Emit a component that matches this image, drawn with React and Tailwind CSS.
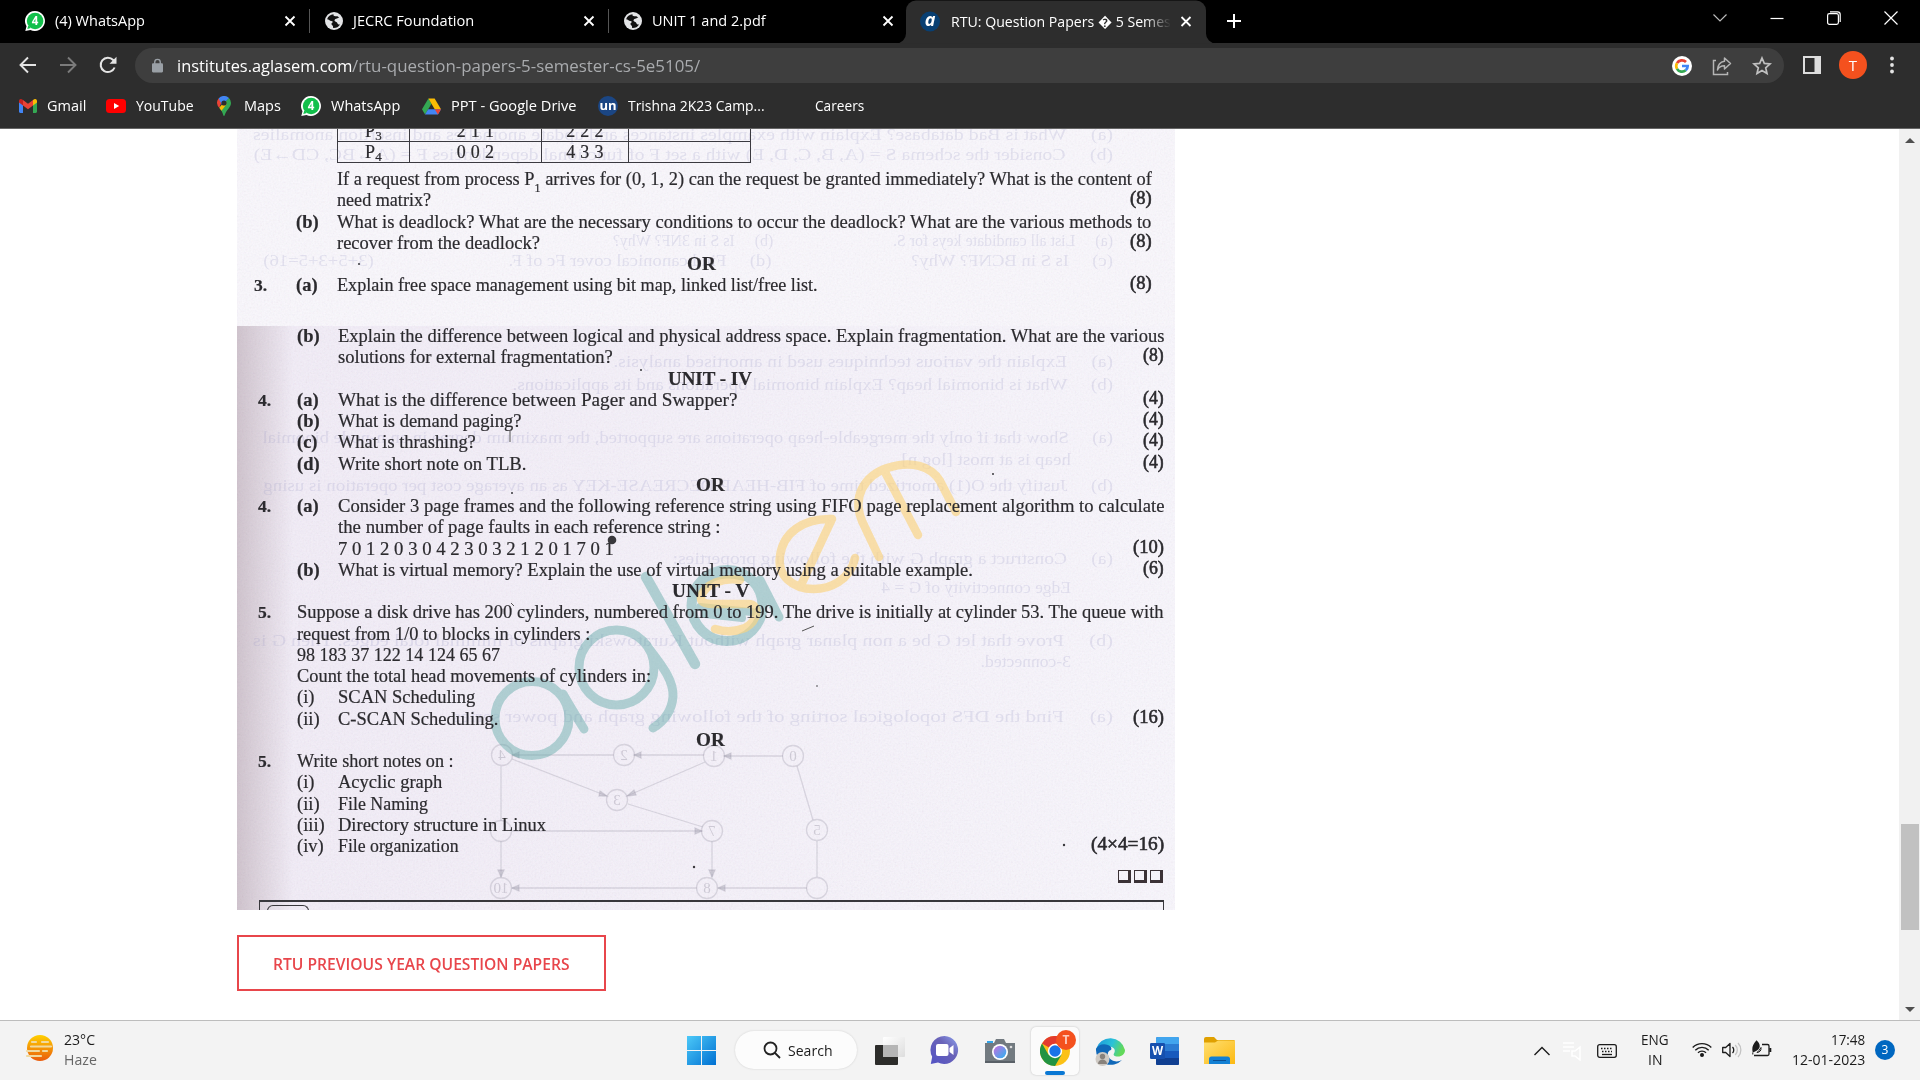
import React, { useLayoutEffect, useRef } from "react";

/* Text stretched horizontally so that it fills exactly `w` pixels. */
function Fit({ w, className = "", children }) {
  const ref = useRef(null);
  useLayoutEffect(() => {
    const el = ref.current;
    el.style.transform = "none";
    el.style.transform = `scaleX(${w / el.offsetWidth})`;
  }, [w]);
  return (
    <span className={"inline-block shrink-0 whitespace-nowrap " + className} style={{ width: w }}>
      <span ref={ref} className="inline-block origin-left">{children}</span>
    </span>
  );
}

/* ---------- icons ---------- */
const WhatsApp = ({ className = "" }) => (
  <svg viewBox="0 0 20 20" className={"h-5 w-5 shrink-0 " + className}>
    <path d="M10 0a10 10 0 1 1-4.6 18.9L0.3 20l1.2-4.8A10 10 0 0 1 10 0z" fill="#fff" />
    <circle cx="10.1" cy="10" r="8.3" fill="#12c04b" />
    <path d="M2.3 17.9l1-3.4 2.6 2.5z" fill="#12c04b" />
    <text x="10" y="14.2" fontSize="11.5" fontWeight="700" fill="#fff" textAnchor="middle" fontFamily="Open Sans, sans-serif">4</text>
  </svg>
);
const Globe = () => (
  <svg viewBox="0 0 18 18" className="h-[18px] w-[18px] shrink-0">
    <circle cx="9" cy="9" r="9" fill="#e3e4e6" />
    <path d="M8.5 2.2c-3 .2-5.600 2.200-6.400 5 1.800.1 2.400 1.600 4.200 1.700 1.700.1 1.800 1.300.6 2.100-.9.700-.3 2 .6 2.400.8.400.4 1.700.7 2.600 2.900.2 5.500-1.200 6.800-3.600-1.200.3-2.200-.2-2.600-1.200-.5-1.300-2-1.100-2.700-2.100-.6-1 .2-2 1.500-2.300 1.200-.3 1.700-1.300 3.300-1-1.100-.3-1-1.400-2.300-1.600-1.600-.2-2.900.3-3.700-.7z" fill="#111" />
  </svg>
);
const Close = () => (
  <svg viewBox="0 0 12 12" className="h-3 w-3 shrink-0" stroke="#fff" strokeWidth="1.8"><path d="M1.500 1.500l9 9M10.500 1.500l-9 9" /></svg>
);

const Gmail = () => (
  <svg viewBox="0 0 18 14" className="h-3.5 w-[18px] shrink-0">
    <path d="M0 2v10.600c0 .8.500 1.400 1.300 1.400H4V6z" fill="#4285f4" />
    <path d="M14 14h2.700c.8 0 1.300-.6 1.300-1.400V2l-4 4z" fill="#34a853" />
    <path d="M14 .9V6.500L18 3.500V2c0-1.900-2-2.500-3.200-1.600z" fill="#fbbc04" />
    <path d="M4 6.500V.9l5 3.800 5-3.800v5.600l-5 3.800z" fill="#ea4335" />
    <path d="M0 2v1.500l4 3V.9L3.200.4C1.900-.5 0 .1 0 2z" fill="#c5221f" />
  </svg>
);
const YouTube = () => (
  <svg viewBox="0 0 20 14" className="h-3.5 w-5 shrink-0"><rect width="20" height="14" rx="3.500" fill="#f00" /><path d="M8 4l5.200 3L8 10z" fill="#fff" /></svg>
);
const Maps = () => (
  <svg viewBox="0 0 14 20" className="h-5 w-3.5 shrink-0">
    <path d="M7 0a7 7 0 0 1 7 7c0 4.500-4.500 6.500-6.300 12.300-.2.900-1.200.9-1.400 0C5.500 16 4 14 2.300 11.800L12 1.800z" fill="#34a853" />
    <path d="M1.600 2.500L5 5.300 2.300 11.800A7.500 7.500 0 0 1 0 7c0-1.700.6-3.300 1.600-4.500z" fill="#ea4335" />
    <path d="M2.300 11.800L9 3.900 9.300 8.500 4.500 14.700z" fill="#fbbc04" />
    <path d="M1.600 2.500A7 7 0 0 1 12 2L5 9z" fill="#4285f4" />
    <circle cx="7" cy="7" r="2.600" fill="#2d2d2d" />
  </svg>
);
const Drive = () => (
  <svg viewBox="0 0 20 17" className="h-[17px] w-[19px] shrink-0">
    <path d="M6.700 0L0 11.500 3.200 17 10 5.600z" fill="#34a853" />
    <path d="M6.700 0h6.600L20 11.500h-6.600z" fill="#fbbc04" />
    <path d="M3.200 17l3.300-5.500H20L16.800 17z" fill="#4285f4" />
    <path d="M13.400 11.500H20L16.800 17z" fill="#ea4335" />
  </svg>
);
const Google = () => (
  <svg viewBox="0 0 20 20" className="h-5 w-5 shrink-0">
    <circle cx="10" cy="10" r="10" fill="#fff" />
    <g fill="none" strokeWidth="2.700">
      <path d="M5 7.200A5.700 5.700 0 0 1 14 6" stroke="#ea4335" />
      <path d="M5 12.800a5.700 5.700 0 0 1 0-5.600" stroke="#fbbc05" />
      <path d="M13.700 14.300A5.700 5.700 0 0 1 5 12.800" stroke="#34a853" />
      <path d="M10 10h5.700a5.700 5.700 0 0 1-2 4.300" stroke="#4285f4" />
    </g>
  </svg>
);

/* ---------- browser frame ---------- */
function Tab({ icon, label, w, sep }) {
  return (
    <div className="flex h-[43px] w-[299.500px] items-center pl-[15px]">
      {icon}
      <span className="ml-2.5 flex grow"><Fit w={w}>{label}</Fit></span>
      <Close />
      <span className={"ml-[13px] h-6 w-px " + (sep ? "bg-[#555]" : "bg-transparent")} />
    </div>
  );
}

function TabStrip() {
  return (
    <div className="flex h-[43px] items-center bg-black pb-px pl-2.5 text-[14.500px] text-white">
      <Tab icon={<WhatsApp />} label="(4) WhatsApp" w={90} sep />
      <Tab icon={<Globe />} label="JECRC Foundation" w={121} sep />
      <div className="flex h-[43px] w-[297px] items-center pl-[15px]">
        <Globe />
        <span className="ml-2.5 flex grow"><Fit w={114}>UNIT 1 and 2.pdf</Fit></span>
        <Close />
        <span className="w-[12px]" />
      </div>
      <div className="relative flex h-[43px] w-[300px] translate-y-[0.500px] items-center rounded-t-[10px] bg-[#2d2d2d] pl-3.5">
        <svg viewBox="0 0 10 10" className="absolute bottom-0 -left-2.5 h-2.5 w-2.5"><path d="M10 0v10H0A10 10 0 0 0 10 0z" fill="#2d2d2d" /></svg>
        <svg viewBox="0 0 10 10" className="absolute -right-2.5 bottom-0 h-2.5 w-2.5"><path d="M0 0v10h10A10 10 0 0 1 0 0z" fill="#2d2d2d" /></svg>
        <span className="flex h-5 w-5 shrink-0 items-center justify-center rounded-full bg-[#083f72] text-[18px] font-bold italic leading-none"><span className="-mt-1.5">a</span></span>
        <span className="ml-[11px] w-[220px] overflow-hidden [mask-image:linear-gradient(to_right,#000_88%,transparent)]">
          <Fit w={220}>RTU: Question Papers � 5 Semes</Fit>
        </span>
        <span className="ml-[9px]"><Close /></span>
      </div>
      <svg viewBox="0 0 16 16" className="ml-[20px] h-4 w-4" stroke="#fff" strokeWidth="2"><path d="M8 1v14M1 8h14" /></svg>
      <div className="mb-1.5 ml-auto flex items-center gap-[43px] pr-[22px] text-white">
        <svg viewBox="0 0 14 14" className="h-3.5 w-3.5" fill="none" stroke="#bbb" strokeWidth="1.200"><path d="M.5 3.500L7 10 13.500 3.500" /></svg>
        <svg viewBox="0 0 14 14" className="h-3.5 w-3.5" stroke="#fff" strokeWidth="1.200"><path d="M.5 7.500h13" /></svg>
        <svg viewBox="0 0 14 14" className="h-3.5 w-3.5" fill="none" stroke="#fff" strokeWidth="1.200"><rect x=".6" y="2.600" width="10.800" height="10.800" rx="1.800" /><path d="M3 .8h7.500a2.700 2.700 0 0 1 2.700 2.700V11" /></svg>
        <svg viewBox="0 0 14 14" className="h-3.5 w-3.5" stroke="#fff" strokeWidth="1.200"><path d="M.5.5l13 13M13.500.5l-13 13" /></svg>
      </div>
    </div>
  );
}

function Toolbar() {
  return (
    <div className="flex h-[45px] items-center bg-[#2d2d2d] pl-[19px]">
      <svg viewBox="0 0 18 18" className="-mt-0.5 h-[18px] w-[18px]" fill="none" stroke="#e4e4e4" strokeWidth="1.900"><path d="M17 9H2M9 1.500L1.500 9 9 16.500" /></svg>
      <svg viewBox="0 0 18 18" className="-mt-0.5 ml-[22px] h-[18px] w-[18px]" fill="none" stroke="#7b7b7b" strokeWidth="1.900"><path d="M1 9h15M9 1.500L16.500 9 9 16.500" /></svg>
      <svg viewBox="0 0 18 18" className="-mt-0.5 ml-[22px] h-[18px] w-[18px]" fill="none" stroke="#e4e4e4" strokeWidth="2"><path d="M15.600 11.500A7.200 7.200 0 1 1 14.200 4l2 2.400" /><path d="M17.500.8v7H10.500z" fill="#e4e4e4" stroke="none" /></svg>
      <div className="ml-[18px] flex h-[35px] w-[1649px] items-center rounded-full bg-[#3e3e3e] pl-[17px] pr-[12px] text-[16px]">
        <svg viewBox="0 0 12 15" className="h-[15px] w-[11px] shrink-0"><rect y="5" width="12" height="10" rx="1.200" fill="#9aa0a6" /><path d="M3 6V3.800a3 3 0 0 1 6 0V6" fill="none" stroke="#9aa0a6" strokeWidth="1.500" /></svg>
        <span className="ml-[14px] flex">
          <Fit w={175} className="text-white">institutes.aglasem.com</Fit>
          <Fit w={348} className="text-[#a9abae]">/rtu-question-papers-5-semester-cs-5e5105/</Fit>
        </span>
        <span className="grow" />
        <Google />
        <svg viewBox="0 0 20 20" className="ml-5 h-5 w-5" fill="none" stroke="#b5b5b5" strokeWidth="1.500"><path d="M4 4.500H1.500v14h14V16" /><path d="M12.500 2l6 5.500-6 5.500v-3.200C9 9.800 7 10.500 5.500 14c.2-5 3-8.200 7-8.800z" strokeLinejoin="round" /></svg>
        <svg viewBox="0 0 20 20" className="ml-5 h-5 w-5" fill="none" stroke="#c0c0c0" strokeWidth="1.700"><path d="M10 2l2.300 5.400 5.800.5-4.400 3.900 1.300 5.700-5-3-5 3 1.300-5.700L1.900 7.900l5.800-.5z" /></svg>
      </div>
      <svg viewBox="0 0 18 18" className="-mt-px ml-[19px] h-[18px] w-[18px]"><rect x="1" y="1" width="16" height="16" fill="none" stroke="#ddd" strokeWidth="2" /><rect x="11.500" y="1" width="6" height="16" fill="#ddd" /></svg>
      <span className="-mt-px ml-[18px] flex h-7 w-7 items-center justify-center rounded-full bg-[#f4511e] text-[15px] text-white">T</span>
      <svg viewBox="0 0 4 18" className="-mt-px ml-[23px] h-[18px] w-1" fill="#e4e4e4"><circle cx="2" cy="2.500" r="1.900" /><circle cx="2" cy="9" r="1.900" /><circle cx="2" cy="15.500" r="1.900" /></svg>
    </div>
  );
}

function Bookmarks() {
  const slot = "flex items-center";
  return (
    <div className="flex h-[41px] items-center border-b border-[#666] bg-[#2d2d2d] pb-1 pl-[19px] text-[14.500px] text-white">
      <span className={slot + " w-[87px] gap-2.5"}><Gmail /><Fit w={39}>Gmail</Fit></span>
      <span className={slot + " w-[111px] gap-2.5"}><YouTube /><Fit w={58}>YouTube</Fit></span>
      <span className={slot + " w-[84px] gap-[13px]"}><Maps /><Fit w={37}>Maps</Fit></span>
      <span className={slot + " w-[121px] gap-2.5"}><WhatsApp /><Fit w={69}>WhatsApp</Fit></span>
      <span className={slot + " w-[176px] gap-2.5"}><Drive /><Fit w={126}>PPT - Google Drive</Fit></span>
      <span className={slot + " w-[217px] gap-2.5"}>
        <span className="flex h-5 w-5 items-center justify-center rounded-full bg-[#1b4684] text-[13px] font-bold leading-none"><span className="-mt-0.5">un</span></span>
        <Fit w={137}>Trishna 2K23 Camp...</Fit>
      </span>
      <Fit w={49}>Careers</Fit>
    </div>
  );
}

/* ---------- scanned question paper ---------- */
const P1 = (
  <>If a request from process P<span className="relative top-[7px] text-[12px]">1</span> arrives for (0, 1, 2) can the request be granted immediately? What is the content of</>
);
const partOne = [
  { t: P1, w: 815 },
  { t: "need matrix?", w: 94, m: "(8)", mw: 22 },
  { l: "(b)", t: "What is deadlock? What are the necessary conditions to occur the deadlock? What are the various methods to", w: 814 },
  { t: "recover from the deadlock?", w: 203, m: "(8)", mw: 22 },
  { h: "OR", c: "ml-[451px]", w: 29 },
  { n: "3.", l: "(a)", t: "Explain free space management using bit map, linked list/free list.", w: 481, m: "(8)", mw: 22 },
];
const partTwo = [
  { l: "(b)", t: "Explain the difference between logical and physical address space. Explain fragmentation. What are the various", w: 826 },
  { t: "solutions for external fragmentation?", w: 275, m: "(8)", mw: 21 },
  { h: "UNIT - IV", c: "ml-[431px]", w: 84 },
  { n: "4.", l: "(a)", t: "What is the difference between Pager and Swapper?", w: 399, m: "(4)", mw: 21 },
  { l: "(b)", t: "What is demand paging?", w: 183, m: "(4)", mw: 21 },
  { l: "(c)", t: "What is thrashing?", w: 138, m: "(4)", mw: 21 },
  { l: "(d)", t: "Write short note on TLB.", w: 188, m: "(4)", mw: 21 },
  { h: "OR", c: "ml-[459px]", w: 29 },
  { n: "4.", l: "(a)", t: "Consider 3 page frames and the following reference string using FIFO page replacement algorithm to calculate", w: 826 },
  { t: "the number of page faults in each reference string :", w: 383 },
  { t: "7 0 1 2 0 3 0 4 2 3 0 3 2 1 2 0 1 7 0 1", w: 276, m: "(10)", mw: 31 },
  { l: "(b)", t: "What is virtual memory? Explain the use of virtual memory using a suitable example.", w: 635, m: "(6)", mw: 21 },
  { h: "UNIT - V", c: "ml-[435px]", w: 77 },
  { n: "5.", wide: true, t: "Suppose a disk drive has 200 cylinders, numbered from 0 to 199. The drive is initially at cylinder 53. The queue with", w: 867 },
  { wide: true, t: "request from 1/0 to blocks in cylinders :", w: 293 },
  { wide: true, t: "98 183 37 122 14 124 65 67", w: 203 },
  { wide: true, t: "Count the total head movements of cylinders in:", w: 354 },
  { r: "(i)", t: "SCAN Scheduling", w: 137 },
  { r: "(ii)", t: "C-SCAN Scheduling.", w: 160, m: "(16)", mw: 31 },
  { h: "OR", c: "ml-[459px]", w: 29 },
  { n: "5.", wide: true, t: "Write short notes on :", w: 157 },
  { r: "(i)", t: "Acyclic graph", w: 104 },
  { r: "(ii)", t: "File Naming", w: 90 },
  { r: "(iii)", t: "Directory structure in Linux", w: 208 },
  { r: "(iv)", t: "File organization", w: 121, m: "(4×4=16)", mw: 73 },
];

function Row({ d, numPad }) {
  if (d.h) {
    return (
      <div className="flex h-[21.260px] font-bold"><span className={d.c}><Fit w={d.w}>{d.h}</Fit></span></div>
    );
  }
  return (
    <div className="flex h-[21.260px]">
      <span className={"w-[60px] shrink-0 text-[17.500px] font-bold " + numPad}>{d.n}</span>
      {!d.wide && <span className={"w-[41px] shrink-0 " + (d.r ? "" : "font-bold")}>{d.l || d.r}</span>}
      <Fit w={d.w}>{d.t}</Fit>
      {d.m && <Fit w={d.mw} className="ml-auto -translate-y-0.5 [-webkit-text-stroke:0.6px_#2b2a2e]">{d.m}</Fit>}
    </div>
  );
}

/* Print from the back of the sheet, faintly visible in mirror image: [top, right, width, text]. */
const bleed = [
  [-5, 62, 860, "(a)     What is Bad database? Explain with examples instances and update anomalies and insertion anomalies"],
  [15, 62, 860, "(b)     Consider the schema S = (A, B, C, D, E) with a set F of functional dependencies F = (A→BC, CD→E)"],
  [101, 62, 500, "(a)     List all candidate keys for S.                              (b)     Is S in 3NF? Why?"],
  [121, 62, 850, "(c)     Is S in BCNF? Why?                              (d)     Find canonical cover Fc of F.                             (3+5+3+5=16)"],
  [222, 62, 500, "(a)     Explain the various techniques used in amortised analysis."],
  [245, 62, 600, "(b)     What is binomial heap? Explain binomial operations and its applications."],
  [298, 62, 850, "(a)     Show that if only the mergeable-heap operations are supported, the maximum degree in an n-node binomial"],
  [320, 104, 170, "heap is at most [log n]"],
  [346, 62, 850, "(b)     Justify the O(1) amortized time of FIB-HEAP-DECREASE-KEY as an average cost per operation is using"],
  [419, 62, 440, "(a)     Construct a graph G with the following properties:"],
  [448, 104, 190, "Edge connectivity of G = 4"],
  [501, 62, 860, "(b)     Prove that let G be a non planar graph without Kuratowski graphs of minimal total edges. Then G is"],
  [522, 104, 90, "3-connected."],
  [577, 62, 660, "(a)     Find the DFS topological sorting of the following graph and power series"],
];
const nodes = [[265, 626, "4"], [387, 626, "2"], [477, 627, "1"], [556, 627, "0"], [380, 671, "3"], [264, 702, ""], [475, 702, "7"], [580, 701, "5"], [264, 759, "10"], [470, 759, "8"], [580, 759, ""]];

function Bleed() {
  return (
    <div aria-hidden="true" className="absolute inset-0 overflow-hidden text-[17px] text-[#8f93c4]/20 blur-[0.500px]">
      {bleed.map(([top, right, w, s]) => (
        <div key={top} className="absolute -scale-x-100 whitespace-pre" style={{ top, right }}>
          <Fit w={w} className="whitespace-pre">{s}</Fit>
        </div>
      ))}
      <svg viewBox="0 0 938 781" className="absolute inset-0 h-full w-full" fill="none" stroke="#9a97a8" strokeOpacity=".3" strokeWidth="1.300">
        {nodes.map(([x, y, s], i) => (
          <g key={i}>
            <circle cx={x} cy={y} r="10.500" />
            <text transform={`translate(${x} ${y + 5}) scale(-1 1)`} textAnchor="middle" fontSize="15" fill="#9a97a8" fillOpacity=".4" stroke="none">{s}</text>
          </g>
        ))}
        <path d="M275 626H377M397 626H467M487 627H546M275 630L370 667M468 633L390 667M264 637V692M264 712V748M275 702H465M391 675L466 698M475 712V748M560 637L576 691M580 712V748M275 759H460M481 759H570" />
        <path d="M282 623l-7 3 7 3zM404 623l-7 3 7 3zM494 624l-7 3 7 3zM363 662l7 5-8 0zM397 661l-7 6 9-1zM261 741l3 7 3-7zM472 741l3 7 3-7zM458 699l7 3-7 3zM282 756l-7 3 7 3zM488 756l-7 3 7 3z" fill="#9a97a8" fillOpacity=".35" />
      </svg>
    </div>
  );
}

function Watermark() {
  return (
    <svg viewBox="237 129 938 781" className="absolute inset-0 h-full w-full" fill="none" strokeLinecap="round">
      <g stroke="#5fa8a6" opacity=".45" strokeWidth="9">
        <circle cx="532" cy="718.500" r="37" />
        <path d="M563 694Q571 708 584 729" />
        <circle cx="616.500" cy="667.500" r="37.500" />
        <path d="M650 650C664 668 674 682 673 697Q671 717 653 728" />
        <path d="M646 577L695 664" strokeWidth="10.500" />
        <circle cx="727" cy="605.500" r="35.500" strokeWidth="10" />
        <path d="M760 580L779 617" />
        <path d="M700 607L752 612M705 614L742 618" strokeWidth="8" />
        <path d="M703 588Q714 570 744 578" strokeWidth="6" />
      </g>
      <g stroke="#fbd480" opacity=".66" strokeWidth="8.500">
        <path d="M740 580C724 577 704 584 701 597Q700 604 712 604H748C761 604 758 621 745 628Q730 634 715 629" />
        <path d="M855 558C850 581 829 589 814 589C792 589 777 575 780 556C783 533 803 518 832 519L802 583" strokeLinejoin="round" />
        <path d="M879 557L862 521C852 497 864 476 887 468C911 460 931 466 940 481L956 512M885 472L918 535" />
      </g>
    </svg>
  );
}

function Grain() {
  return (
    <svg className="absolute inset-0 h-full w-full opacity-[.13] mix-blend-multiply">
      <filter id="grain"><feTurbulence type="fractalNoise" baseFrequency="0.55" numOctaves="2" seed="4" /><feColorMatrix type="saturate" values="0.45" /></filter>
      <rect width="100%" height="100%" filter="url(#grain)" />
    </svg>
  );
}

function Paper() {
  const cell = "border border-t-0 border-[#3b3a40] text-center";
  return (
    <div className="relative h-[781px] w-[938px] overflow-hidden bg-[#faf8fd] font-['Liberation_Serif',serif] text-[18.500px] leading-[21.260px] text-[#2b2a2e]">
      <div className="absolute inset-x-0 top-[197px] bottom-0 bg-linear-to-r from-[#d2c6d0] via-[#f3eef8] via-[6%] to-[#f9f7fd]" />
      <Bleed />
      <Grain />
      <Watermark />
      <div className="relative flex h-full flex-col [-webkit-text-stroke:0.200px_#2b2a2e]">
        <div className="h-[40px] overflow-hidden">
          <div className="ml-[100px] grid w-[414px] grid-cols-[73px_132px_87px_122px] text-[18px] tracking-[0.300px]">
            {[["3", "2 1 1", "2 2 2", "h-[13px] leading-[5px]"], ["4", "0 0 2", "4 3 3", "h-[21px] leading-[21px]"]].map(([i, a, b, h]) => (
              <React.Fragment key={i}>
                <span className={cell + " " + h}>P<span className="relative top-[3px] text-[13px]">{i}</span></span>
                <span className={cell + " border-l-0 " + h}>{a}</span>
                <span className={cell + " border-l-0 " + h}>{b}</span>
                <span className={cell + " border-l-0 " + h} />
              </React.Fragment>
            ))}
          </div>
        </div>
        <div className="-ml-px h-[157px] pr-[23px]">{partOne.map((d, i) => <Row key={i} d={d} numPad="pl-[18px]" />)}</div>
        <div className="pr-[11px]">{partTwo.map((d, i) => <Row key={i} d={d} numPad="pl-[21px]" />)}</div>
        <div className="mt-[13px] flex justify-end gap-[3px] pr-3">
          {[0, 1, 2].map((i) => <span key={i} className="h-[13px] w-[13px] border-[1.500px] border-r-[3px] border-b-[3px] border-[#3b3236]" />)}
        </div>
        <div className="mt-auto mr-[11px] ml-[22px] h-[10px] border border-t-[2px] border-b-0 border-[#38373c] pl-[7px] pt-[3px]">
          <div className="h-[6px] w-[42px] rounded-t-lg border-[1.500px] border-b-0 border-[#38373c]" />
        </div>
      </div>
      <svg viewBox="0 0 938 781" className="absolute inset-0 h-full w-full" fill="#39383c">
        <circle cx="375" cy="411" r="4.300" />
        <path d="M273 302v11M565 502l12-5M274 474l3 3" stroke="#555" strokeWidth="1" />
        <circle cx="275" cy="364" r="1" /><circle cx="404" cy="241" r="1" /><circle cx="457" cy="738" r="1.200" /><circle cx="827" cy="716" r="1.200" /><circle cx="122" cy="135" r="1" /><circle cx="756" cy="345" r="1" /><circle cx="580" cy="557" r=".8" />
      </svg>
    </div>
  );
}

/* ---------- taskbar ---------- */
function Taskbar() {
  return (
    <div className="flex h-[60px] items-center border-t border-[#bdbdbd] bg-[#f3f3f3] text-[15px] leading-5 text-[#1b1b1b]">
      <svg viewBox="0 0 28 28" className="-mt-1.5 ml-[25px] h-7 w-7 shrink-0">
        <defs><linearGradient id="sun" x1="0" y1="0" x2="0" y2="1"><stop stopColor="#ffd000" /><stop offset="1" stopColor="#ea5b0c" /></linearGradient></defs>
        <circle cx="15" cy="14" r="13" fill="url(#sun)" />
        <g stroke="#f0d9a0" strokeWidth="2.200" strokeLinecap="round"><path d="M7 8h4M17 8h6M6 12.500h20M2 17h12M18 17h4M2 22h14" /></g>
      </svg>
      <span className="-mt-1 ml-[11px] flex w-[590px] flex-col">
        <Fit w={31}>23°C</Fit>
        <Fit w={33} className="text-[#666]">Haze</Fit>
      </span>
      <svg viewBox="0 0 29 29" className="ml-[33px] h-[29px] w-[29px] shrink-0">
        <defs><linearGradient id="win" x1="0" y1="0" x2="1" y2="1"><stop stopColor="#4cc9f8" /><stop offset="1" stopColor="#0070d2" /></linearGradient></defs>
        <path d="M0 0h14v14H0zM15 0h14v14H15zM0 15h14v14H0zM15 15h14v14H15z" fill="url(#win)" />
      </svg>
      <div className="-mt-px ml-[19px] flex h-[38px] w-[122px] shrink-0 items-center rounded-full bg-[#fcfcfc] pl-7 shadow-[0_0_2px_#ccc]">
        <svg viewBox="0 0 18 18" className="mr-[7px] h-[18px] w-[18px]" fill="none" stroke="#222" strokeWidth="1.800"><circle cx="7.500" cy="7.500" r="6" /><path d="M12 12l5 5" /></svg>
        <Fit w={45}>Search</Fit>
      </div>
      <svg viewBox="0 0 30 28" className="ml-[18px] h-7 w-[30px] shrink-0">
        <defs><linearGradient id="tv" x1="0" y1="0" x2="1" y2="1"><stop stopColor="#fff" /><stop offset="1" stopColor="#ddd" /></linearGradient></defs>
        <rect y="8" width="23" height="20" rx="1" fill="#2c2c2a" /><rect x="8" y="0" width="22" height="20" rx="1" fill="url(#tv)" /><rect x="8" y="8" width="15" height="12" fill="#b5b5b5" />
      </svg>
      <svg viewBox="0 0 29 29" className="ml-[25px] h-[29px] w-[29px] shrink-0">
        <defs><linearGradient id="chat" x1="0" y1="1" x2="1" y2="0"><stop stopColor="#5252c4" /><stop offset=".6" stopColor="#6a63b8" /><stop offset="1" stopColor="#8da3f0" /></linearGradient></defs>
        <path d="M14.500 0a14 14 0 1 1-6.500 26.600L.8 28l1.400-7.200A14 14 0 0 1 14.500 0z" fill="url(#chat)" />
        <rect x="6" y="8" width="12.500" height="12" rx="2" fill="#fff" /><path d="M19.500 12l4-3v10l-4-3z" fill="#fff" />
      </svg>
      <svg viewBox="0 0 30 24" className="ml-[26px] h-6 w-[30px] shrink-0">
        <rect x="2" y="2" width="6" height="4" fill="#32a4e8" /><path d="M9 4l2-4h8l2 4h9v20H0V4z" fill="#727a80" /><path d="M0 22h30v2H0z" fill="#596067" />
        <defs><linearGradient id="lens" x1="0" y1="0" x2="1" y2="1"><stop stopColor="#c86ee0" /><stop offset="1" stopColor="#29b3f0" /></linearGradient></defs>
        <circle cx="15" cy="13" r="8" fill="#fff" /><circle cx="15" cy="13" r="6.300" fill="url(#lens)" /><circle cx="26" cy="8" r="1.300" fill="#ddd" />
      </svg>
      <div className="relative ml-4 flex h-12 w-12 shrink-0 items-center justify-center rounded-[5px] bg-[#fbfbfb] shadow-[0_0_2px_#bbb]">
        <svg viewBox="0 0 30 30" className="h-[30px] w-[30px]">
          <circle cx="15" cy="15" r="15" fill="#fbc116" />
          <path d="M15 15L2 7.500A15 15 0 0 1 28 7.500H15z" fill="#e33b2e" />
          <path d="M2 7.500A15 15 0 0 0 15 30l6.500-11.300L15 15 8.500 18.700z" fill="#229342" />
          <circle cx="15" cy="15" r="7.200" fill="#fff" /><circle cx="15" cy="15" r="5.700" fill="#1a73e8" />
        </svg>
        <span className="absolute top-[3px] right-[3px] flex h-5 w-5 items-center justify-center rounded-full bg-[#f4511e] text-[12px] font-bold text-white/70">T</span>
        <span className="absolute bottom-0 left-3.5 h-1 w-5 rounded-full bg-[#0a78d4]" />
      </div>
      <svg viewBox="0 0 30 30" className="ml-4 h-[30px] w-[30px] shrink-0">
        <defs>
          <linearGradient id="eg" x1="0" y1="0" x2="1" y2=".3"><stop stopColor="#1a93dc" /><stop offset=".6" stopColor="#2bc2d8" /><stop offset="1" stopColor="#62d95a" /></linearGradient>
        </defs>
        <path d="M1 13A15 15 0 0 1 30 14c0 4-3 6.500-7 6.500-4 0-5-1.600-4-3 2.500-4-1-7-5-7-5 0-9 3-13 2.500z" fill="url(#eg)" />
        <path d="M1 13c2-4 7-6 12-4 3 1 4 3 3 5-5 1-4 9 3 11 3 1 6 0 8-1a15 15 0 0 1-26-11z" fill="#1068b8" />
        <circle cx="7.500" cy="23" r="7" fill="#cfcac4" /><circle cx="7.500" cy="20.500" r="2.700" fill="#88827c" /><path d="M3 28c0-6 9-6 9 0z" fill="#88827c" />
      </svg>
      <svg viewBox="0 0 29 28" className="ml-[25px] h-7 w-[29px] shrink-0">
        <rect x="6" width="23" height="28" rx="1.500" fill="#185abd" /><path d="M6 1.500Q6 0 7.500 0h20Q29 0 29 1.500V7H6z" fill="#41a5ee" /><path d="M6 7h23v7H6z" fill="#2b7cd3" /><path d="M6 21h23v5.500q0 1.500-1.500 1.500h-20Q6 28 6 26.500z" fill="#103f91" />
        <rect y="6" width="15" height="16" rx="1.300" fill="#1650ae" />
        <text x="7.500" y="18.300" fontSize="11.500" fontWeight="700" fill="#fff" textAnchor="middle" fontFamily="Open Sans, sans-serif">W</text>
      </svg>
      <svg viewBox="0 0 31 27" className="ml-[25px] h-[27px] w-[31px] shrink-0">
        <defs><linearGradient id="fold" x1="0" y1="0" x2="1" y2="1"><stop stopColor="#ffdf70" /><stop offset="1" stopColor="#fcb912" /></linearGradient></defs>
        <path d="M0 2Q0 0 2 0h8l3 3h17.500v6H0z" fill="#e0a000" /><path d="M0 5.500h11l3-2h17V27H0z" fill="url(#fold)" /><path d="M5 27v-5q0-2.500 2.500-2.500h16Q26 19.500 26 22v5z" fill="#1280d4" /><path d="M9 23.500h13" stroke="#0a4f94" />
      </svg>

      <svg viewBox="0 0 16 10" className="ml-auto h-2.5 w-4 shrink-0" fill="none" stroke="#1b1b1b" strokeWidth="1.400"><path d="M.5 9L8 1.500 15.500 9" /></svg>
      <svg viewBox="0 0 20 20" className="ml-3 h-5 w-5 shrink-0" fill="none" stroke="#fff" strokeWidth="1.500"><path d="M1 2h11M1 6h11M1 10h7M10 10h3l5-4v13l-5-4h-3z" /></svg>
      <svg viewBox="0 0 20 14" className="ml-[15px] h-3.5 w-5 shrink-0" fill="none" stroke="#1b1b1b" strokeWidth="1.300"><rect x=".7" y=".7" width="18.600" height="12.600" rx="2" /><path d="M4 4.500h12M5 7.500h10" strokeDasharray="1.500 1.500" /><path d="M5 10.500h10" /></svg>
      <span className="-mt-1 ml-6 flex w-7 shrink-0 flex-col items-center"><Fit w={28}>ENG</Fit><Fit w={14}>IN</Fit></span>
      <svg viewBox="0 0 20 15" className="-mt-0.5 ml-[23px] h-[15px] w-5 shrink-0" fill="none" stroke="#1b1b1b" strokeWidth="1.400"><path d="M.7 5.500a13 13 0 0 1 18.600 0M3.300 8.200a9.300 9.300 0 0 1 13.400 0M6 10.800a5.600 5.600 0 0 1 8 0" /><circle cx="10" cy="13" r="1.300" fill="#1b1b1b" /></svg>
      <svg viewBox="0 0 20 16" className="-mt-0.5 ml-2.5 h-4 w-5 shrink-0" fill="none" stroke="#1b1b1b" strokeWidth="1.300"><path d="M.7 5.500h3L8 1.500v13l-4.300-4h-3z" strokeLinejoin="round" /><path d="M10.500 5a4.200 4.200 0 0 1 0 6" /><path d="M13.200 3a7 7 0 0 1 0 10M16 1a10 10 0 0 1 0 14" stroke="#c3c3c3" /></svg>
      <svg viewBox="0 0 20 17" className="-mt-1 ml-2.5 h-[17px] w-5 shrink-0" fill="none" stroke="#1b1b1b" strokeWidth="1.300"><path d="M10 4.500h5.500q1.500 0 1.500 1.500v8q0 1.500-1.500 1.500H2" /><path d="M18.300 8v4" strokeWidth="2" /><path d="M4.500.3C6.500 2.500 8.300 4 7.500 7.500 6.500 10 4 11 .8 12.500-.2 9 0 5 4.500.3z" fill="#1b1b1b" stroke="none" /><path d="M9 7.500Q9.500 12 5 12.500 7 11 9 7.500M.8 12.500v2" strokeWidth="1" /></svg>
      <span className="-mt-1 ml-[20px] flex w-[73px] shrink-0 flex-col items-end"><Fit w={34}>17:48</Fit><Fit w={73}>12-01-2023</Fit></span>
      <span className="-mt-px mr-[25px] ml-[10px] flex h-5 w-5 shrink-0 items-center justify-center rounded-full bg-[#0067c0] text-[12px] text-white">3</span>
    </div>
  );
}

export default function App() {
  return (
    <div className="flex h-[1080px] w-[1920px] flex-col overflow-hidden bg-white font-['Open_Sans',sans-serif]">
      <TabStrip />
      <Toolbar />
      <Bookmarks />
      <div className="flex min-h-0 grow">
        <main className="grow overflow-hidden pl-[237px]">
          <Paper />
          <div className="mt-[25px] flex h-14 w-[369px] items-center border-[2.500px] border-[#e8464b] pt-px pl-[34px] text-[16px] font-semibold text-[#e8464b]">
            <Fit w={297}>RTU PREVIOUS YEAR QUESTION PAPERS</Fit>
          </div>
        </main>
        <aside className="flex w-[21px] flex-col items-center bg-[#f1f1f1] pt-[9px] pb-2">
          <svg viewBox="0 0 10 5" className="h-[5px] w-2.5" fill="#505050"><path d="M0 5l5-5 5 5z" /></svg>
          <span className="mt-[681px] h-[106px] w-[18px] bg-[#c1c1c1]" />
          <svg viewBox="0 0 10 5" className="mt-auto h-[5px] w-2.5" fill="#505050"><path d="M0 0l5 5 5-5z" /></svg>
        </aside>
      </div>
      <Taskbar />
    </div>
  );
}
